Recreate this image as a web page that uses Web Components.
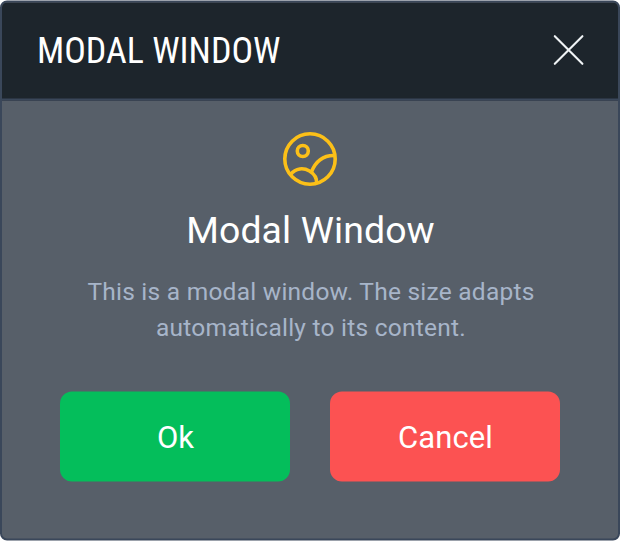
<!DOCTYPE html>
<html lang="en">
<head>
<meta charset="utf-8">
<title>Modal Window</title>
<style>
html, body { margin: 0; height: 100%; background: #fff; }
body { font-family: Roboto, "Liberation Sans", sans-serif; overflow: hidden; }
</style>
</head>
<body>
<modal-window>
  <span slot="title">MODAL WINDOW</span>
  <modal-message>
    <picture-icon slot="icon"></picture-icon>
    <span slot="heading">Modal Window</span>
    This is a modal window. The size adapts automatically to its content.
  </modal-message>
  <modal-button slot="actions" style="--button-color:#04be5b">Ok</modal-button>
  <modal-button slot="actions" style="--button-color:#fc5252">Cancel</modal-button>
</modal-window>
<script>
function define(name, html) {
  const template = document.createElement('template');
  template.innerHTML = html;
  customElements.define(name, class extends HTMLElement {
    constructor() {
      super();
      this.attachShadow({ mode: 'open' }).append(template.content.cloneNode(true));
    }
  });
}

define('close-icon', `
  <style>:host { display: block; width: 32px; height: 32px; } svg { display: block; }</style>
  <svg width="32" height="32" viewBox="0 0 32 32" fill="none" stroke="#eff3f5" stroke-width="2.1" stroke-linecap="round">
    <path d="M2.8 1.7 30.4 29.3M30.4 1.7 2.8 29.3"/>
  </svg>`);

define('picture-icon', `
  <style>:host { display: block; width: 56px; height: 56px; } svg { display: block; }</style>
  <svg width="56" height="56" viewBox="0 .5 56 56" fill="none" stroke="#fcc018" stroke-width="3.6">
    <circle cx="28" cy="28" r="25.2"/>
    <circle cx="20.8" cy="20" r="5.5"/>
    <path d="M8.5 43.5C14 36.8 21.5 36.5 27.5 40C32.5 43 35 47.5 34.6 52.5"/>
    <path d="M29.3 41.2C34 29.5 42 24 53.2 24.6"/>
  </svg>`);

define('modal-button', `
  <style>
    :host { display: block; flex: 1; }
    button { display: flex; align-items: center; justify-content: center; width: 100%; height: 90px; padding: 1px 0 0 1px; border: 0;
      border-radius: 12px; background: var(--button-color); color: #fff; font: 400 31px Roboto, sans-serif; letter-spacing: .1px; }
  </style>
  <button type="button"><slot></slot></button>`);

define('modal-message', `
  <style>
    :host { display: flex; flex-direction: column; align-items: center; text-align: center; }
    h1 { margin: 17px 0 0 1px; font-size: 37.4px; line-height: 50px; font-weight: 400; letter-spacing: .12px; color: #fff; }
    p { margin: 19px 0 0 2px; width: 470px; font-size: 24.5px; line-height: 36px; letter-spacing: .24px; color: #a7b5c9; }
  </style>
  <slot name="icon"></slot>
  <h1><slot name="heading"></slot></h1>
  <p><slot></slot></p>`);

define('modal-window', `
  <style>
    :host { display: flex; flex-direction: column; box-sizing: border-box; width: 620px; height: 540px; transform: translateY(.5px);
      border: 2px solid #3a475a; border-radius: 7px; background: #575f69; overflow: hidden; }
    header { display: flex; align-items: center; justify-content: space-between; box-sizing: border-box; height: 98px; flex: none;
      padding: 0 34px 0 35px; border-bottom: 2px solid #3a475a; background: #1d252c; color: #fff; }
    h2 { margin: 0; font: 400 36px "Roboto Condensed", Roboto, sans-serif; font-stretch: 75%; white-space: nowrap; }
    main { padding: 31px 58px 0; }
    footer { display: flex; gap: 40px; margin-top: 46px; }
  </style>
  <header><h2><slot name="title"></slot></h2><close-icon></close-icon></header>
  <main><slot></slot><footer><slot name="actions"></slot></footer></main>`);
</script>
</body>
</html>
